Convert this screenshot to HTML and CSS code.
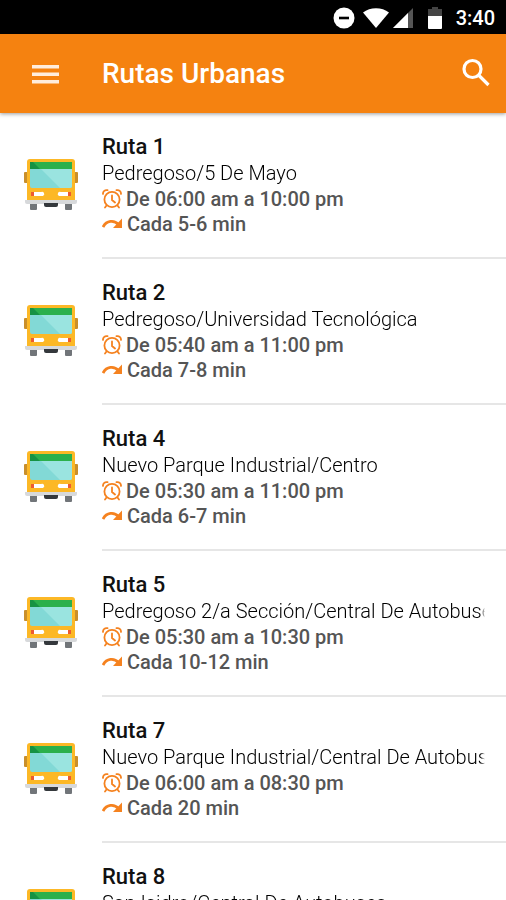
FILE: index.html
```html
<!DOCTYPE html>
<html lang="es">

<head>
    <meta charset="UTF-8">
    <meta name="viewport" content="width=device-width, initial-scale=1.0">
    <title>Rutas Urbanas</title>
    <link rel="stylesheet" href="styles.css">
</head>

<body>
    <svg class="symbols" aria-hidden="true">
        <symbol id="bus" viewBox="0 0 56 54">
            <path fill="#c98f2b" d="M2 14h4v11H2a1 1 0 0 1-1-1v-9a1 1 0 0 1 1-1zM50 14h4a1 1 0 0 1 1 1v9a1 1 0 0 1-1 1h-4z" />
            <path fill="#717579" d="M7 45h7v6a1 1 0 0 1-1 1H8a1 1 0 0 1-1-1zM42 45h7v6a1 1 0 0 1-1 1h-5a1 1 0 0 1-1-1z" />
            <path fill="#fcb826" d="M7 1h42a3 3 0 0 1 3 3v39H4V4a3 3 0 0 1 3-3z" />
            <path fill="#82d9d6" d="M7 10h42v18a2 2 0 0 1-2 2H9a2 2 0 0 1-2-2z" />
            <path fill="#9ae4e0" d="M17 10h32v18a2 2 0 0 1-2 2H37z" />
            <path fill="#2bb04c" d="M7 4h42v7H7z" />
            <path fill="#169244" d="M7 4h3l7 7H7z" />
            <path fill="#fff" d="M11 34h7a2 2 0 0 1 2 4h-9zM45 34h-7a2 2 0 0 0-2 4h9z" />
            <path fill="#ed5a31" d="M8 34h3v4H8zM45 34h3v4h-3z" />
            <path fill="#d7d9db" d="M2 42h52v2a2 2 0 0 1-2 2H4a2 2 0 0 1-2-2z" />
            <path fill="#34383c" d="M21 45h14v2a2 2 0 0 1-2 2H23a2 2 0 0 1-2-2z" />
        </symbol>
        <symbol id="clock" viewBox="0 0 20 20">
            <g fill="none" stroke="#f5821f" stroke-width="1.8" stroke-linecap="round">
                <circle cx="10" cy="10.500" r="7.600" />
                <path d="M10 6.500V11l3 2.500M4.500 16.500l-1.500 2M15.500 16.500l1.500 2M1 5C.800 2.500 3 .500 5.500 1.200M19 5C19.200 2.500 17 .500 14.500 1.200" />
            </g>
        </symbol>
        <symbol id="arrow" viewBox="0 0 20 20">
            <path fill="none" stroke="#f5821f" stroke-width="2.800" d="M1 13C4.500 6.500 12 5.500 16.500 10.500" />
            <path fill="#f5821f" d="M20 4.500V14h-9z" />
        </symbol>
    </svg>

    <div class="app">
        <div class="status-bar">
            <svg class="status-dnd" viewBox="0 0 22 22" aria-hidden="true">
                <circle cx="11" cy="11" r="10.500" fill="#fff" />
                <path d="M6 11h10" stroke="#000" stroke-width="2.600" />
            </svg>
            <svg class="status-wifi" viewBox="0 0 26 20" aria-hidden="true">
                <path fill="#fff" d="M0 4.500C7-1.200 19-1.200 26 4.500L13 20z" />
            </svg>
            <svg class="status-signal" viewBox="0 0 20 20" aria-hidden="true">
                <path fill="#555" d="M20 0v20H0z" />
                <path fill="#fff" d="M15 5v15H0z" />
            </svg>
            <svg class="status-battery" viewBox="0 0 14 22" aria-hidden="true">
                <path fill="#444" d="M4 0h6v2h4v8H0V2h4z" />
                <path fill="#fff" d="M0 9h14v12a1 1 0 0 1-1 1H1a1 1 0 0 1-1-1z" />
            </svg>
            <span class="status-time">3:40</span>
        </div>

        <header class="toolbar">
            <button class="icon-button" type="button" aria-label="Menú">
                <svg class="menu-icon" viewBox="0 0 28 20" aria-hidden="true">
                    <path fill="#ffeddc" d="M1 1h27v3.500H1zM1 8.500h27V12H1zM1 16h27v3.500H1z" />
                </svg>
            </button>
            <h1 class="toolbar-title">Rutas Urbanas</h1>
            <button class="icon-button" type="button" aria-label="Buscar">
                <svg class="search-icon" viewBox="0 0 28 28" aria-hidden="true">
                    <g fill="none" stroke="#fff" stroke-width="3.200">
                        <circle cx="10.500" cy="9" r="8.500" />
                        <path d="M16 14.500L26.500 25" />
                    </g>
                </svg>
            </button>
        </header>

        <ul class="routes">
            <li class="route">
                <svg class="route-bus" aria-hidden="true"><use href="#bus" /></svg>
                <div class="route-info">
                    <h2 class="route-name">Ruta 1</h2>
                    <p class="route-path">Pedregoso/5 De Mayo</p>
                    <p class="route-hours"><svg class="route-icon" aria-hidden="true"><use href="#clock" /></svg>De 06:00 am a 10:00 pm</p>
                    <p class="route-interval"><svg class="route-icon" aria-hidden="true"><use href="#arrow" /></svg>Cada 5-6 min</p>
                </div>
            </li>
            <li class="route">
                <svg class="route-bus" aria-hidden="true"><use href="#bus" /></svg>
                <div class="route-info">
                    <h2 class="route-name">Ruta 2</h2>
                    <p class="route-path">Pedregoso/Universidad Tecnológica</p>
                    <p class="route-hours"><svg class="route-icon" aria-hidden="true"><use href="#clock" /></svg>De 05:40 am a 11:00 pm</p>
                    <p class="route-interval"><svg class="route-icon" aria-hidden="true"><use href="#arrow" /></svg>Cada 7-8 min</p>
                </div>
            </li>
            <li class="route">
                <svg class="route-bus" aria-hidden="true"><use href="#bus" /></svg>
                <div class="route-info">
                    <h2 class="route-name">Ruta 4</h2>
                    <p class="route-path">Nuevo Parque Industrial/Centro</p>
                    <p class="route-hours"><svg class="route-icon" aria-hidden="true"><use href="#clock" /></svg>De 05:30 am a 11:00 pm</p>
                    <p class="route-interval"><svg class="route-icon" aria-hidden="true"><use href="#arrow" /></svg>Cada 6-7 min</p>
                </div>
            </li>
            <li class="route">
                <svg class="route-bus" aria-hidden="true"><use href="#bus" /></svg>
                <div class="route-info">
                    <h2 class="route-name">Ruta 5</h2>
                    <p class="route-path">Pedregoso 2/a Sección/Central De Autobuses</p>
                    <p class="route-hours"><svg class="route-icon" aria-hidden="true"><use href="#clock" /></svg>De 05:30 am a 10:30 pm</p>
                    <p class="route-interval"><svg class="route-icon" aria-hidden="true"><use href="#arrow" /></svg>Cada 10-12 min</p>
                </div>
            </li>
            <li class="route">
                <svg class="route-bus" aria-hidden="true"><use href="#bus" /></svg>
                <div class="route-info">
                    <h2 class="route-name">Ruta 7</h2>
                    <p class="route-path">Nuevo Parque Industrial/Central De Autobuses</p>
                    <p class="route-hours"><svg class="route-icon" aria-hidden="true"><use href="#clock" /></svg>De 06:00 am a 08:30 pm</p>
                    <p class="route-interval"><svg class="route-icon" aria-hidden="true"><use href="#arrow" /></svg>Cada 20 min</p>
                </div>
            </li>
            <li class="route">
                <svg class="route-bus" aria-hidden="true"><use href="#bus" /></svg>
                <div class="route-info">
                    <h2 class="route-name">Ruta 8</h2>
                    <p class="route-path">San Isidro/Central De Autobuses</p>
                </div>
            </li>
        </ul>
    </div>
</body>

</html>
```
FILE: styles.css
```css
* {
    box-sizing: border-box;
}

body {
    margin: 0;
    font-family: Roboto, "Liberation Sans", sans-serif;
    background: #fff;
    color: #111;
}

h1,
h2,
p,
ul {
    margin: 0;
    padding: 0;
}

.symbols {
    display: none;
}

.app {
    display: flex;
    flex-direction: column;
    height: 100vh;
}

.status-bar {
    display: flex;
    flex: none;
    align-items: center;
    justify-content: flex-end;
    height: 34px;
    padding: 2px 11px 0;
    background: #000;
    color: #fff;
}

.status-dnd {
    width: 22px;
    height: 22px;
    margin-right: 8px;
}

.status-wifi {
    width: 26px;
    height: 20px;
    margin-right: 4px;
}

.status-signal {
    width: 20px;
    height: 20px;
    margin-right: 15px;
}

.status-battery {
    width: 14px;
    height: 22px;
    margin-right: 14px;
}

.status-time {
    font-size: 20px;
    font-weight: 500;
}

.toolbar {
    display: flex;
    flex: none;
    align-items: center;
    height: 79px;
    padding: 0 16px 0 31px;
    background: #f58210;
    color: #fff;
    box-shadow: 0 1px 4px rgba(0, 0, 0, 0.4);
    z-index: 1;
}

.toolbar-title {
    flex: 1;
    margin-left: 43px;
    font-size: 28px;
    font-weight: 500;
}

.icon-button {
    display: flex;
    padding: 0;
    border: 0;
    background: none;
}

.menu-icon {
    width: 28px;
    height: 20px;
}

.search-icon {
    width: 28px;
    height: 28px;
    overflow: visible;
}

.routes {
    flex: 1;
    min-height: 0;
    overflow-y: auto;
    scrollbar-width: none;
    list-style: none;
}

.route {
    display: flex;
    align-items: flex-start;
    padding-left: 23px;
}

.route-bus {
    flex: none;
    width: 56px;
    height: 54px;
    margin: 45px 23px 0 0;
}

.route-info {
    flex: 1;
    min-width: 0;
    padding: 21px 21px 21px 0;
    border-bottom: 2px solid #e6e6e6;
}

.route-name {
    font-size: 22px;
    font-weight: 500;
    line-height: 26px;
}

.route-path {
    overflow: hidden;
    font-size: 20px;
    font-weight: 300;
    line-height: 26px;
    white-space: nowrap;
    color: #000;
    -webkit-mask-image: linear-gradient(to left, transparent, #000 4px);
    mask-image: linear-gradient(to left, transparent, #000 4px);
}

.route-hours,
.route-interval {
    display: flex;
    align-items: center;
    gap: 4px;
    font-size: 20px;
    font-weight: 500;
    line-height: 26px;
    color: #555;
}

.route-interval {
    gap: 5px;
    line-height: 24px;
}

.route-icon {
    width: 20px;
    height: 20px;
}
```
